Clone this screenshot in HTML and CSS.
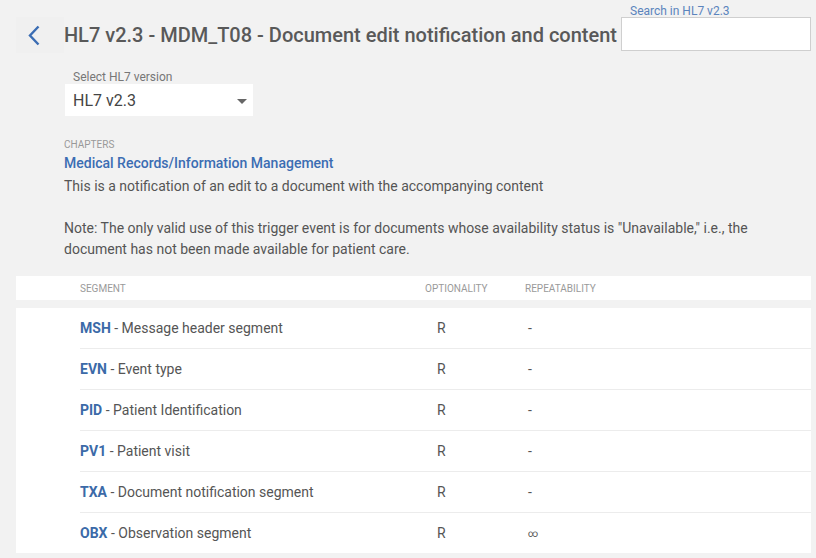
FILE: index.html
```html
<!DOCTYPE html>
<html>
<head>
<meta charset="utf-8">
<link rel="stylesheet" href="styles.css">
</head>
<body>
<div class="page">
  <header class="header">
    <button class="back" aria-label="Back">
      <svg width="14" height="21" viewBox="0 0 14 21"><path d="M11.5 1.5 L3 10.5 L11.5 19.5" fill="none" stroke="#3b6db3" stroke-width="2.4"/></svg>
    </button>
    <h1 class="title">HL7 v2.3 - MDM_T08 - Document edit notification and content</h1>
    <div class="search">
      <label class="search-label">Search in HL7 v2.3</label>
      <input class="search-input" type="text">
    </div>
  </header>

  <section class="content">
    <div class="version">
      <div class="version-label">Select HL7 version</div>
      <div class="select">
        <span>HL7 v2.3</span>
        <span class="caret"></span>
      </div>
    </div>

    <div class="chapters-label">CHAPTERS</div>
    <a class="chapter-link">Medical Records/Information Management</a>
    <p class="desc">This is a notification of an edit to a document with the accompanying content<br><br>Note: The only valid use of this trigger event is for documents whose availability status is "Unavailable," i.e., the document has not been made available for patient care.</p>
  </section>

  <div class="table-head">
    <div class="th th-seg">SEGMENT</div>
    <div class="th th-opt">OPTIONALITY</div>
    <div class="th th-rep">REPEATABILITY</div>
  </div>
  <div class="table-body">
    <div class="row"><div class="seg"><b>MSH</b> - Message header segment</div><div class="opt">R</div><div class="rep">-</div></div>
    <div class="row"><div class="seg"><b>EVN</b> - Event type</div><div class="opt">R</div><div class="rep">-</div></div>
    <div class="row"><div class="seg"><b>PID</b> - Patient Identification</div><div class="opt">R</div><div class="rep">-</div></div>
    <div class="row"><div class="seg"><b>PV1</b> - Patient visit</div><div class="opt">R</div><div class="rep">-</div></div>
    <div class="row"><div class="seg"><b>TXA</b> - Document notification segment</div><div class="opt">R</div><div class="rep">-</div></div>
    <div class="row"><div class="seg"><b>OBX</b> - Observation segment</div><div class="opt">R</div><div class="rep inf">∞</div></div>
  </div>
</div>
</body>
</html>
```

FILE: styles.css
```css
* { box-sizing: border-box; }
html, body { margin: 0; padding: 0; }
body {
  background: #f2f2f2;
  font-family: Roboto, "Liberation Sans", sans-serif;
  color: #555;
  width: 816px;
  height: 558px;
  overflow: hidden;
}
.page { padding: 4px 5px 0 16px; }

.header {
  display: flex;
  align-items: flex-end;
}
.back {
  width: 48px;
  height: 36px;
  border: none;
  background: #f0f0f0;
  display: flex;
  align-items: center;
  justify-content: flex-start;
  padding: 0 0 0 11px;
  margin: 0;
}
.title {
  flex: 1;
  margin: 0 4px 0 0;
  font-size: 20px;
  font-weight: 500;
  line-height: 36px;
  color: #595959;
  white-space: nowrap;
}
.search {
  display: flex;
  flex-direction: column;
  width: 190px;
  margin-bottom: 2px;
}
.search-label {
  font-size: 12px;
  line-height: 13px;
  color: #5b84bd;
  padding-left: 9px;
  position: relative;
  top: 1px;
}
.search-input {
  height: 34px;
  width: 190px;
  border: 1px solid #cfcfcf;
  background: #fff;
  margin: 0;
  outline: none;
}

.content { padding-left: 48px; padding-right: 40px; }
.version { padding-top: 17px; }
.version-label {
  font-size: 12px;
  line-height: 14px;
  color: #777;
  padding-left: 9px;
}
.select {
  margin-left: 1px;
  width: 188px;
  height: 32px;
  background: #fff;
  display: flex;
  align-items: center;
  justify-content: space-between;
  padding: 0 6px 0 8px;
  font-size: 16px;
  color: #444;
}
.caret {
  width: 0; height: 0;
  border-left: 5px solid transparent;
  border-right: 5px solid transparent;
  border-top: 5px solid #666;
  margin-top: 2px;
}
.chapters-label {
  margin-top: 23px;
  font-size: 10px;
  line-height: 12px;
  color: #999;
}
.chapter-link {
  display: block;
  margin-top: 2px;
  font-size: 14px;
  font-weight: 500;
  line-height: 20px;
  color: #3b6db3;
}
.desc {
  margin: 3px 0 0 0;
  font-size: 14px;
  line-height: 21px;
  color: #555;
}

.table-head {
  margin-top: 16px;
  height: 24px;
  background: #fff;
  display: grid;
  grid-template-columns: 409px 100px 1fr;
  align-items: center;
  font-size: 10px;
  color: #9a9a9a;
}
.th-seg { padding-left: 64px; }
.table-body {
  margin-top: 8px;
  background: #fff;
  padding-left: 64px;
  height: 245px;
}
.row {
  height: 41px;
  display: grid;
  grid-template-columns: 345px 100px 1fr;
  align-items: center;
  border-top: 1px solid #ececec;
  font-size: 14px;
  color: #555;
}
.row:first-child { border-top: none; height: 40px; }
.seg b { color: #3b6aa8; font-weight: 700; }
.opt { padding-left: 12px; }
.rep { padding-left: 3px; }
.inf { font-size: 10px; }
```
